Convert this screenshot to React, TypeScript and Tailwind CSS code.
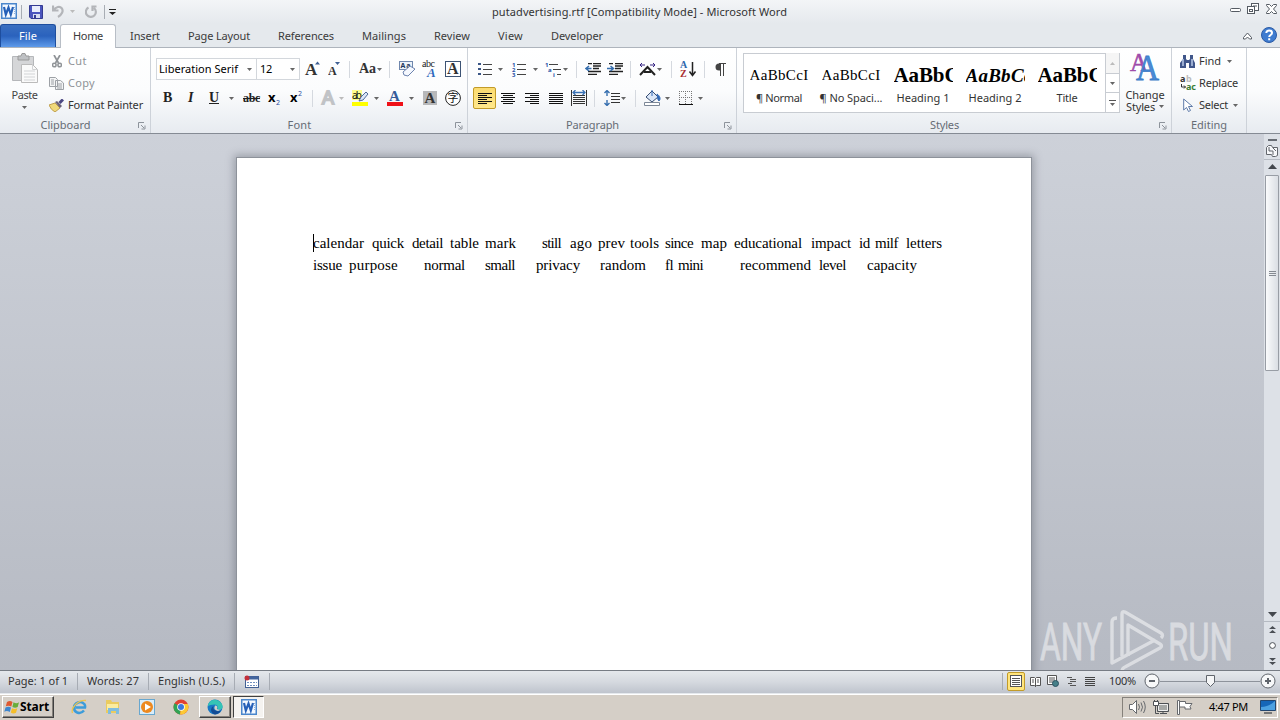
import React from 'react';

interface FitProps {
    w: number;
    children: string;
    className?: string;
}

// Text whose letter spacing is adjusted until it fills the given width
const Fit: React.FC<FitProps> = ({ w, children, className = '' }) => {
    const ref = React.useRef<HTMLSpanElement>(null);
    const [spacing, setSpacing] = React.useState(0);

    React.useLayoutEffect(() => {
        if (!ref.current) return;
        const natural = ref.current.getBoundingClientRect().width;
        setSpacing((w - natural) / children.length);
    }, [w, children]);

    return (
        <span className={`inline-block shrink-0 whitespace-pre ${className}`} style={{ width: w }}>
            <span ref={ref} style={{ letterSpacing: `${spacing}px` }}>{children}</span>
        </span>
    );
};

const Arrow = ({ className = '', light = false }: { className?: string; light?: boolean }) => (
    <svg className={`shrink-0 ${className}`} width="5" height="3" viewBox="0 0 5 3">
        <path d="M0 0H5L2.5 3Z" fill={light ? '#bbb' : '#666'} />
    </svg>
);

const Sep = ({ className = '' }: { className?: string }) => (
    <div className={`h-[17px] w-px shrink-0 bg-[#d5d9df] ${className}`} />
);

const Launcher = () => (
    <svg width="8" height="8" viewBox="0 0 8 8" fill="none" stroke="#8d939b">
        <path d="M.5 6V.5H6M3 3l3 3M7 3.5V7H3.5" />
    </svg>
);

const WordIcon = ({ className = '' }: { className?: string }) => (
    <svg className={`shrink-0 ${className}`} width="16" height="16" viewBox="0 0 16 16">
        <rect x=".75" y=".75" width="14.5" height="14.5" fill="#f4f9ff" stroke="#4a86cc" strokeWidth="1.5" />
        <path d="M13 4.500h1M13 6.500h1M13 8.500h1M13 10.500h1" stroke="#8fb4de" />
        <path d="M3 4l1.800 7.500L7.500 4.500l2.300 7L12 4" fill="none" stroke="#2560b8" strokeWidth="2.200" />
    </svg>
);

const TitleBar = () => (
    <div className="flex h-6 shrink-0 items-start bg-gradient-to-b from-[#f3f5f7] to-[#e5e9ed]">
        <div className="flex h-[23px] w-[492px] shrink-0 items-center">
            <WordIcon className="ml-px mb-px" />
            <div className="ml-1 h-3.5 w-px bg-[#a8adb4]" />
            <svg className="ml-[7px]" width="14" height="14" viewBox="0 0 14 14">
                <path d="M.5.5h13v13H2L.5 12Z" fill="#4b55bd" stroke="#343b91" />
                <path d="M3 1h8v6H3z" fill="#e9edfb" />
                <path d="M4 9h7v4H4z" fill="#d8ddf1" />
                <path d="M5 10h2v3H5z" fill="#343b91" />
            </svg>
            <svg className="ml-[9px]" width="12" height="13" viewBox="0 0 12 13" fill="none" stroke="#b3b5b9" strokeWidth="2.2">
                <path d="M1 .5v5h5.5M1.5 5C4 1.8 7.8.8 9.7 3.2c2.2 2.8 0 6.5-3.7 8.8" />
            </svg>
            <Arrow light className="ml-[6px]" />
            <svg className="ml-[10px]" width="12" height="13" viewBox="0 0 12 13" fill="none" stroke="#b3b5b9" strokeWidth="2.2">
                <path d="M3.500 2.500a5 5 0 1 0 5.500.5M11.500 1.500H7.500V6" />
            </svg>
            <div className="ml-[7px] h-3.5 w-px bg-[#a8adb4]" />
            <svg className="ml-[4px]" width="7" height="6" viewBox="0 0 7 6">
                <path d="M0 0h7v1H0zM0 3h7L3.5 6Z" fill="#222" />
            </svg>
        </div>
        <Fit w={295} className="pt-[4px] text-[11px] leading-4 text-[#333]">putadvertising.rtf [Compatibility Mode] - Microsoft Word</Fit>
        <svg className="mt-[3px] ml-auto mr-0.5" width="49" height="13" viewBox="0 0 49 13" fill="#fff" stroke="#555b63">
            <rect x="1.5" y="5.5" width="10" height="3" rx="1" />
            <rect x="22.5" y=".5" width="7" height="7" />
            <path d="M24 3h4" />
            <rect x="18.5" y="3.5" width="7" height="7" />
            <rect x="20.500" y="6.5" width="3" height="2" />
            <path d="M37.5 1.5h3l2 2 2-2h3v1l-3 3.5 3 3.5v1h-3l-2-2-2 2h-3v-1l3-3.5-3-3.5z" />
        </svg>
    </div>
);

const TabBar = () => (
    <div className="flex h-6 shrink-0 items-end border-b border-[#aeb4bc] bg-[#e5e9ed] text-[11px] leading-4 text-[#3b3b3b]">
        <div className="flex h-[23px] w-14 shrink-0 items-center justify-center rounded-t-[3px] border border-b-0 border-[#1e4e9e] bg-gradient-to-b from-[#3a6fc0] via-[#2a62bd] to-[#5f9bea] text-white">
            <Fit w={18}>File</Fit>
        </div>
        <div className="-mb-px ml-1 flex h-6 w-[56px] shrink-0 items-center justify-center rounded-t-[3px] border border-b-0 border-[#b8bec6] bg-white pb-px">
            <Fit w={30}>Home</Fit>
        </div>
        <div className="flex h-6 items-center pl-[14px] pt-[2px]">
            <Fit w={30}>Insert</Fit>
            <Fit w={62} className="ml-7">Page Layout</Fit>
            <Fit w={56} className="ml-7">References</Fit>
            <Fit w={44} className="ml-7">Mailings</Fit>
            <Fit w={36} className="ml-7">Review</Fit>
            <Fit w={25} className="ml-7">View</Fit>
            <Fit w={52} className="ml-7">Developer</Fit>
        </div>
        <svg className="mb-[7px] ml-auto" width="9" height="8" viewBox="0 0 9 8" fill="#fff" stroke="#555b63">
            <path d="M.5 5.5l4-4.5 4 4.5v1.5h-2l-2-2-2 2h-2z" />
        </svg>
        <svg className="mb-[4px] ml-[9px] mr-[3px]" width="16" height="16" viewBox="0 0 16 16">
            <circle cx="8" cy="8" r="7.5" fill="#3f7cd0" stroke="#2c5ba5" />
            <path d="M5.3 6C5.3 2.6 11 2.7 11 6c0 2-2.8 2-2.8 4M8.2 11.2v2" stroke="#fff" strokeWidth="2" fill="none" />
        </svg>
    </div>
);

interface GroupProps {
    title: string;
    titleWidth: number;
    className: string;
    launcher?: boolean;
    children: React.ReactNode;
}

const Group: React.FC<GroupProps> = ({ title, titleWidth, className, launcher = true, children }) => (
    <div className={`flex h-[85px] shrink-0 flex-col border-r border-[#cdd2d9] ${className}`}>
        <div className="h-[69px]">{children}</div>
        <div className="flex h-4 items-center text-[11px] leading-4 text-[#666c75]">
            <div className="flex flex-1 justify-center"><Fit w={titleWidth}>{title}</Fit></div>
            {launcher && <div className="w-[19px] pl-[7px] pt-px"><Launcher /></div>}
        </div>
    </div>
);

const ClipboardGroup = () => (
    <Group title="Clipboard" titleWidth={50} className="w-[151px]">
        <div className="flex h-full text-[11px] leading-4">
            <div className="flex w-[49px] flex-col items-center text-[#444]">
                <svg className="mt-[5px]" width="28" height="31" viewBox="0 0 28 31">
                    <path d="M1.5 3.5h21v24h-21z" fill="#d5d6d8" stroke="#b5b7ba" />
                    <path d="M7 3h3l1-2.5h3L15 3h3v4H7z" fill="#bfc1c4" stroke="#999" />
                    <path d="M10.500 11.5h11l5 5v13h-16z" fill="#fafafa" stroke="#bbb" />
                    <path d="M21.500 11.500v5h5M13 18h11M13 21h11M13 24h11M13 27h11" stroke="#d2d4d6" fill="none" />
                </svg>
                <Fit w={26} className="mt-[3px]">Paste</Fit>
                <Arrow className="mt-[3px]" />
            </div>
            <div className="flex flex-col pt-[2px] text-[#8f9397]">
                <div className="flex h-[22px] items-center">
                    <svg className="ml-[3px]" width="10" height="13" viewBox="0 0 10 13" stroke="#8f9397" fill="none">
                        <path d="M2 0l4.500 8M8 0L3.500 8" strokeWidth="1.7" />
                        <circle cx="2.300" cy="10" r="1.800" strokeWidth="1.5" /><circle cx="7.700" cy="10" r="1.800" strokeWidth="1.5" />
                    </svg>
                    <Fit w={19} className="ml-[6px]">Cut</Fit>
                </div>
                <div className="flex h-[22px] items-center">
                    <svg width="15" height="13" viewBox="0 0 15 13" stroke="#9da1a6" fill="#f3f4f5">
                        <path d="M.5.5h6l2 2v7h-8zM6.500 3.500h5l3 2.500v6.500h-8z" />
                        <path d="M2 3h3M2 5h3M2 7h3M8 7h5M8 9h5M8 11h5" />
                    </svg>
                    <Fit w={27} className="ml-[4px]">Copy</Fit>
                </div>
                <div className="flex h-[22px] items-center text-[#333]">
                    <svg width="15" height="13" viewBox="0 0 15 13">
                        <path d="M0 6l6-2 5 5-5 4q-4-2-6-7z" fill="#f0d97a" stroke="#c0a050" />
                        <path d="M6 3l2-1 5 5-2 2z" fill="#6b6278" />
                        <path d="M10.500 4l3.500-3.500" stroke="#4b4782" strokeWidth="3" />
                    </svg>
                    <Fit w={75} className="ml-[4px]">Format Painter</Fit>
                </div>
            </div>
        </div>
    </Group>
);

const serifA = 'font-["Liberation_Serif",serif] font-bold';

const FontGroup = () => (
    <Group title="Font" titleWidth={24} className="w-[317px]">
        <div className="flex h-[42px] items-center pl-[5px] text-[11px] leading-5 text-black">
            <div className="flex h-[22px] w-[101px] items-center border border-[#d3d7dc] bg-white pl-[2px]">
                <Fit w={79}>Liberation Serif</Fit>
                <Arrow className="ml-[9px]" />
            </div>
            <div className="-ml-px flex h-[22px] w-[44px] items-center border border-[#d3d7dc] bg-white pl-[3px]">
                <Fit w={12}>12</Fit>
                <Arrow className="ml-[18px]" />
            </div>
            <svg className="ml-[5px] overflow-visible" width="16" height="16" viewBox="0 0 16 16">
                <text x="0" y="14" fontSize="17" className={serifA} fill="#333">A</text>
                <path d="M10 3.500h5L12.500 .5z" fill="#3e5f93" />
            </svg>
            <svg className="ml-[7px]" width="14" height="16" viewBox="0 0 14 16">
                <text x="0" y="14" fontSize="12" className={serifA} fill="#333">A</text>
                <path d="M7 1h5L9.500 4z" fill="#3e5f93" />
            </svg>
            <Sep className="ml-[7px]" />
            <Fit w={17} className="ml-[9px] font-['Liberation_Serif',serif] text-[14px] font-bold text-[#333]">Aa</Fit>
            <Arrow className="ml-px" />
            <Sep className="ml-[7px]" />
            <svg className="ml-[9px]" width="17" height="18" viewBox="0 0 17 18">
                <rect x=".5" y="1.500" width="13" height="8" fill="#eef3fa" stroke="#6f87ad" />
                <text x="1.500" y="8" fontSize="7" textLength="10" className='font-["Noto_Sans",sans-serif] font-bold' fill="#20365a">Aa</text>
                <path d="M4 12l7-6 5 3-7 7-4-1z" fill="#f5f8fe" stroke="#6c83ae" />
            </svg>
            <svg className="ml-[6px] overflow-visible" width="16" height="18" viewBox="0 0 16 18">
                <text x="0" y="7" fontSize="10" textLength="13" className='font-["Liberation_Serif",serif]' fill="#222">abc</text>
                <text x="5" y="17" fontSize="13" className={`${serifA} italic`} fill="#2e68bd">A</text>
            </svg>
            <svg className="ml-[7px]" width="16" height="16" viewBox="0 0 16 16">
                <rect x=".5" y=".5" width="15" height="15" fill="#fff" stroke="#3c5374" />
                <text x="2" y="13" fontSize="16" className={serifA} fill="#333">A</text>
            </svg>
        </div>
        <div className="flex h-4 items-center pl-[12px] font-['Liberation_Serif',serif] text-[14px] leading-4 text-[#222]">
            <Fit w={11} className="font-black">B</Fit>
            <Fit w={9} className="ml-[14px] font-bold italic">I</Fit>
            <Fit w={10} className="ml-[12px] font-bold underline">U</Fit>
            <Arrow className="ml-[10px]" />
            <Fit w={17} className="ml-[9px] text-[12px] font-bold line-through">abc</Fit>
            <svg className="ml-[8px] overflow-visible" width="14" height="16" viewBox="0 0 14 16">
                <text x="0" y="12" fontSize="13" className='font-["Noto_Sans",sans-serif] font-bold'>x</text>
                <text x="8" y="15" fontSize="7" className='font-["Noto_Sans",sans-serif]' fill="#264ca0">2</text>
            </svg>
            <svg className="ml-[8px] overflow-visible" width="14" height="16" viewBox="0 0 14 16">
                <text x="0" y="12" fontSize="13" className='font-["Noto_Sans",sans-serif] font-bold'>x</text>
                <text x="8" y="6" fontSize="7" className='font-["Noto_Sans",sans-serif]' fill="#264ca0">2</text>
            </svg>
            <Sep className="ml-[8px]" />
            <svg className="ml-[8px] overflow-visible" width="16" height="17" viewBox="0 0 16 17">
                <text x="1" y="14" fontSize="18" className='font-["Liberation_Sans",sans-serif]' fill="#fff" stroke="#c1c3c6" strokeWidth="1.800">A</text>
            </svg>
            <Arrow light className="ml-[2px]" />
            <svg className="ml-[8px]" width="17" height="17" viewBox="0 0 17 17">
                <path d="M0 12h16v4H0z" fill="#ff0" />
                <path d="M0 0h10v10H0z" fill="#ffff8c" />
                <text x="0" y="9" fontSize="10" textLength="10" className='font-["Noto_Sans",sans-serif]' fill="#111">ab</text>
                <path d="M7 11l2-4 5-5 2 2-5 6z" fill="#dce7f8" stroke="#506a98" />
            </svg>
            <Arrow className="ml-[5px]" />
            <svg className="ml-[8px]" width="16" height="17" viewBox="0 0 16 17">
                <path d="M0 12h16v4H0z" fill="#ef1018" />
                <text x="2" y="11" fontSize="15" className={serifA} fill="#345b99">A</text>
            </svg>
            <Arrow className="ml-[6px]" />
            <svg className="ml-[9px]" width="14" height="15" viewBox="0 0 14 15">
                <path d="M0 0h14v14H0z" fill="#b7b8ba" />
                <text x="1.500" y="12" fontSize="15" className={serifA} fill="#333">A</text>
            </svg>
            <svg className="ml-[8px] overflow-visible" width="16" height="16" viewBox="0 0 16 16">
                <circle cx="8" cy="8" r="7.400" fill="#fff" stroke="#222" />
                <text x="2.500" y="12" fontSize="11" className='font-["Noto_Sans_CJK_SC",sans-serif]' fill="#111">字</text>
            </svg>
        </div>
    </Group>
);

const Lines = ({ d, className }: { d: string; className: string }) => (
    <svg className={`shrink-0 ${className}`} width="14" height="13" viewBox="0 0 14 13">
        <path d={d} stroke="#111" />
    </svg>
);

const ParagraphGroup = () => (
    <Group title="Paragraph" titleWidth={53} className="w-[269px]">
        <div className="flex h-[42px] items-center pl-[10px]">
            <svg width="14" height="14" viewBox="0 0 14 14">
                <path d="M0 1h3v2H0zM0 6h3v2H0zM0 11h3v2H0z" fill="#3a5585" />
                <path d="M5 2.500h9M5 7.500h9M5 12.500h9" stroke="#444" />
            </svg>
            <Arrow className="ml-[6px]" />
            <svg className="ml-[9px] overflow-visible" width="14" height="15" viewBox="0 0 14 15">
                <g className="font-['Noto_Sans',sans-serif] font-bold" fontSize="6" fill="#2650a5">
                    <text x="0" y="4.500">1</text><text x="0" y="9.500">2</text><text x="0" y="14.500">3</text>
                </g>
                <path d="M5 2.500h9M5 7.500h9M5 12.500h9" stroke="#444" />
            </svg>
            <Arrow className="ml-[7px]" />
            <svg className="ml-[7px] overflow-visible" width="17" height="15" viewBox="0 0 17 15">
                <g className="font-['Noto_Sans',sans-serif] font-bold" fontSize="6" fill="#2650a5">
                    <text x="0" y="4.500">1</text><text x="3" y="9.500">a</text><text x="8" y="14.500">i</text>
                </g>
                <path d="M4 2.500h9M8 7.500h8M12 12.500h4" stroke="#444" />
            </svg>
            <Arrow className="ml-px" />
            <Sep className="ml-[8px]" />
            <svg className="ml-[8px]" width="16" height="12" viewBox="0 0 16 12">
                <path d="M3 .5h4M8 .5h8M8 3h8M8 5.500h6M3 8.500h13M3 11.500h9" stroke="#222" strokeWidth="1.500" />
                <path d="M6.500 5.500H1M4 3L1 5.500 4 8" stroke="#356eae" strokeWidth="1.500" fill="none" />
            </svg>
            <svg className="ml-[6px]" width="16" height="12" viewBox="0 0 16 12">
                <path d="M2 .5h4M8 .5h8M8 3h8M8 5.500h6M2 8.500h14M2 11.500h9" stroke="#222" strokeWidth="1.500" />
                <path d="M0 5.500h6M3.500 3l3 2.500-3 2.500" stroke="#356eae" strokeWidth="1.500" fill="none" />
            </svg>
            <Sep className="ml-[7px]" />
            <svg className="ml-[8px]" width="17" height="13" viewBox="0 0 17 13">
                <path d="M1 12L8.500 4 16 12M5 9h7" stroke="#222" strokeWidth="2" fill="none" />
                <path d="M6 2H1m2-2L1 2l2 2M11 2h5m-2-2l2 2-2 2" stroke="#362483" fill="none" />
            </svg>
            <Arrow className="ml-px" />
            <Sep className="ml-[9px]" />
            <svg className="ml-[8px] overflow-visible" width="16" height="16" viewBox="0 0 16 16">
                <g className="font-['Liberation_Serif',serif] font-bold" fontSize="10">
                    <text x="0" y="7" fill="#2d67ad">A</text><text x="0" y="15.500" fill="#a92d32">Z</text>
                </g>
                <path d="M12.500 1v13M9.500 10.500l3 4 3-4" stroke="#222" strokeWidth="1.500" fill="none" />
            </svg>
            <Sep className="ml-[8px]" />
            <svg className="ml-[10px]" width="11" height="13" viewBox="0 0 11 13">
                <path d="M10 .5H4a3.500 3.500 0 0 0 0 7h1V0" fill="#444" />
                <path d="M5.500 1v12M8.500 1v12M4 .5h7" stroke="#444" />
            </svg>
        </div>
        <div className="-mt-[3px] flex h-[22px] items-center pl-[5px]">
            <div className="flex h-[22px] w-[23px] items-center justify-center rounded-[2px] border border-[#c29b29] bg-gradient-to-b from-[#fbdb70] to-[#ffe88c]">
                <Lines className="" d="M0 1.500h14M0 3.500h9M0 5.500h14M0 7.500h9M0 9.500h14M0 11.500h9" />
            </div>
            <Lines className="ml-[5px]" d="M0 1.500h14M2 3.500h10M0 5.500h14M2 7.500h10M0 9.500h14M2 11.500h10" />
            <Lines className="ml-[10px]" d="M0 1.500h14M5 3.500h9M0 5.500h14M5 7.500h9M0 9.500h14M5 11.500h9" />
            <Lines className="ml-[10px]" d="M0 1.500h14M0 3.500h14M0 5.500h14M0 7.500h14M0 9.500h14M0 11.500h14" />
            <svg className="ml-[8px]" width="16" height="16" viewBox="0 0 16 16" fill="none">
                <path d="M2 5.500h12M2 7.500h12M2 9.500h12M2 11.500h12M2 13.500h12M.5 0v16M15.500 0v16" stroke="#333" />
                <path d="M2 2.500h12M4.500 0L2 2.500 4.500 5M11.500 0L14 2.500 11.500 5" stroke="#3a72b5" strokeWidth="1.300" />
            </svg>
            <Sep className="ml-[7px]" />
            <svg className="ml-[9px]" width="16" height="16" viewBox="0 0 16 16" fill="none">
                <path d="M7 3.500h9M7 6.500h9M7 9.500h9M7 12.500h9" stroke="#333" />
                <path d="M3 0v6M.5 3L3 .5 5.500 3M3 16v-6M.5 13L3 15.500 5.500 13" stroke="#356eae" strokeWidth="1.400" />
            </svg>
            <Arrow className="ml-px" />
            <Sep className="ml-[9px]" />
            <svg className="ml-[8px]" width="17" height="16" viewBox="0 0 17 16">
                <path d="M2 7l6-6 6 6-6 5z" fill="#dbe7f8" stroke="#354c72" />
                <path d="M8 0v6M13 4c3 2 4 5 2 7-2-2-1-4-2-7" stroke="#3269b5" fill="#3269b5" />
                <path d="M.5 12.500h15v3H.5z" fill="#fff" stroke="#7c8797" />
            </svg>
            <Arrow className="ml-[4px]" />
            <svg className="ml-[9px]" width="14" height="14" viewBox="0 0 14 14">
                <path d="M.5 0v13M6.500 0v13M12.500 0v13M0 .5h13M0 6.500h13" stroke="#777" strokeDasharray="1 1" />
                <path d="M0 13.500h14" stroke="#111" />
            </svg>
            <Arrow className="ml-[5px]" />
        </div>
    </Group>
);

const styles = [
    { name: '¶ Normal', width: 46, sample: 'AaBbCcI', look: 'text-[15px]', fit: 59 },
    { name: '¶ No Spaci...', width: 63, sample: 'AaBbCcI', look: 'text-[15px]', fit: 59 },
    { name: 'Heading 1', width: 53, sample: 'AaBbC', look: 'text-[21px] font-bold', fit: 66 },
    { name: 'Heading 2', width: 53, sample: 'AaBbCc', look: 'text-[19px] font-bold italic', fit: 67 },
    { name: 'Title', width: 21, sample: 'AaBbC', look: 'text-[21px] font-bold', fit: 66 },
];

const StylesGroup = () => (
    <Group title="Styles" titleWidth={29} className="w-[435px]">
        <div className="flex h-full items-start pl-[6px] pt-[5px]">
            <div className="flex h-[60px] w-[377px] border border-[#c8ccd2] bg-white text-[11px] leading-4 text-[#333]">
                <div className="-ml-px flex">
                    {styles.map((s, i) => (
                        <div key={i} className="flex w-[72px] shrink-0 flex-col items-center">
                            <div className="mt-[9px] h-[27px] w-[59px] overflow-hidden leading-[25px]">
                                <Fit w={s.fit} className={`font-['Liberation_Serif',serif] text-black ${s.look}`}>{s.sample}</Fit>
                            </div>
                            <Fit w={s.width}>{s.name}</Fit>
                        </div>
                    ))}
                </div>
                <div className="-my-px ml-[2px] flex w-[14px] flex-col border-l border-[#c8ccd2]">
                    <div className="flex h-5 items-center justify-center bg-[#f5f5f5]"><Arrow light className="rotate-180" /></div>
                    <div className="flex h-5 items-center justify-center border-y border-[#c8ccd2]"><Arrow /></div>
                    <div className="flex h-5 flex-col items-center justify-center gap-[2px]">
                        <div className="h-px w-[7px] bg-[#555]" />
                        <Arrow />
                    </div>
                </div>
            </div>
            <div className="flex w-[50px] flex-col items-center text-[11px] leading-[13px] text-[#333]">
                <svg className="overflow-visible" width="30" height="30" viewBox="0 0 30 30">
                    <text x="0" y="18" fontSize="26" textLength="18" lengthAdjust="spacingAndGlyphs" className='font-["Liberation_Serif",serif]' fill="#a04caa" stroke="#a04caa" strokeWidth=".6">A</text>
                    <text x="6" y="27" fontSize="36" textLength="23" lengthAdjust="spacingAndGlyphs" className='font-["Liberation_Serif",serif]' fill="#4a8bd6" stroke="#3c7cc8" strokeWidth=".8">A</text>
                </svg>
                <Fit w={39} className="mt-[5px]">Change</Fit>
                <div className="-mt-px flex items-center">
                    <Fit w={29}>Styles</Fit>
                    <Arrow className="ml-[4px]" />
                </div>
            </div>
        </div>
    </Group>
);

const EditingGroup = () => (
    <Group title="Editing" titleWidth={36} launcher={false} className="w-[75px]">
        <div className="flex flex-col pl-[8px] pt-[2px] text-[11px] leading-4 text-[#333]">
            <div className="flex h-[22px] items-center">
                <svg width="16" height="13" viewBox="0 0 16 13">
                    <path d="M3 0h3v4l1 1h2l1-1V0h3v4l2 4v5H9V8H6v5H0V8l3-4z" fill="#40568a" />
                    <path d="M3 4v7M12 4v7" stroke="#b8c9e8" strokeWidth="1.500" />
                </svg>
                <Fit w={22} className="ml-[3px]">Find</Fit>
                <Arrow className="ml-[6px]" />
            </div>
            <div className="flex h-[22px] items-center">
                <svg className="overflow-visible" width="17" height="16" viewBox="0 0 17 16">
                    <g className="font-['Noto_Sans',sans-serif] font-bold" fontSize="9">
                        <text x="0" y="7" fill="#333">a</text><text x="6" y="7" fill="#bbb">b</text>
                        <text x="6" y="14.500" fill="#3a7d37" textLength="10">ac</text>
                    </g>
                    <path d="M1.500 9v3h4M4 10.500l1.500 1.500L4 13.500" stroke="#333" fill="none" />
                </svg>
                <Fit w={39} className="ml-[2px]">Replace</Fit>
            </div>
            <div className="flex h-[22px] items-center">
                <svg className="ml-[3px]" width="10" height="14" viewBox="0 0 10 14">
                    <path d="M.7 1v11L3.500 9.500 5.500 13.500 7.500 12.500 5.500 8.500h4z" fill="#fff" stroke="#5e7ba9" />
                </svg>
                <Fit w={29} className="ml-[6px]">Select</Fit>
                <Arrow className="ml-[5px]" />
            </div>
        </div>
    </Group>
);

const Ribbon = () => (
    <div className="flex h-[86px] shrink-0 border-b border-[#858b94] bg-gradient-to-b from-white via-[#fbfcfd] to-[#e7ebf0]">
        <ClipboardGroup />
        <FontGroup />
        <ParagraphGroup />
        <StylesGroup />
        <EditingGroup />
    </div>
);

// [word, gap before it, width]
type Word = [string, number, number];

const firstLine: Word[] = [
    ['calendar', 0, 51], ['quick', 8, 32], ['detail', 8, 31], ['table', 7, 29], ['mark', 6, 31],
    ['still', 26, 19], ['ago', 9, 22], ['prev', 6, 27], ['tools', 5, 29], ['since', 6, 28],
    ['map', 8, 26], ['educational', 7, 68], ['impact', 9, 40], ['id', 8, 11], ['milf', 5, 23], ['letters', 8, 36],
];

const secondLine: Word[] = [
    ['issue', 0, 29], ['purpose', 7, 49], ['normal', 26, 41], ['small', 20, 30], ['privacy', 21, 44],
    ['random', 20, 46], ['fl', 19, 8], ['mini', 5, 25], ['recommend', 37, 71], ['level', 8, 27], ['capacity', 21, 50],
];

const TextLine = ({ words }: { words: Word[] }) => (
    <div className="flex h-[22px]">
        {words.map(([word, gap, width]) => (
            <div key={word} className="shrink-0" style={{ marginLeft: gap }}>
                <Fit w={width}>{word}</Fit>
            </div>
        ))}
    </div>
);

const Watermark = () => (
    <svg className="absolute left-[1036px] top-[472px] opacity-60" width="200" height="64" viewBox="0 0 200 64">
        <g className="font-['Roboto',sans-serif]" fill="#f0f1f3" stroke="#f0f1f3" strokeWidth=".8" fontSize="52">
            <text x="4" y="53.500" textLength="62" lengthAdjust="spacingAndGlyphs">ANY</text>
            <text x="132" y="53.500" textLength="65" lengthAdjust="spacingAndGlyphs">RUN</text>
        </g>
        <g fill="none" stroke="#f4f5f6" strokeWidth="3.400" strokeLinejoin="round">
            <path d="M86 50V8q0-3 3-2l36 21q3 2 0 5" />
            <path d="M81 12q-5 0-5 4v41l43-23" />
            <path d="M92 50V19l32 19q3 2 0 4L89 61q-3 1-3 5" />
        </g>
    </svg>
);

const ScrollBar = () => (
    <div className="flex w-4 shrink-0 flex-col items-center bg-[#dde1e7]">
        <div className="mt-[5px] h-[2px] w-[9px] bg-[#686d74]" />
        <svg className="mt-1" width="12" height="12" viewBox="0 0 12 12" fill="#f7f8fa" stroke="#63676d">
            <path d="M.5 2.500l2-2h3l1 2h5v8l-2 1h-3l-1-2h-5zM3 2v4h4v4M7 3l3 3" />
        </svg>
        <div className="mt-[2px] h-px w-4 bg-[#b5bac2]" />
        <svg className="mt-[4px]" width="9" height="5" viewBox="0 0 9 5"><path d="M0 5h9L4.500 0z" fill="#43474d" /></svg>
        <div className="mt-[6px] flex h-[196px] w-[14px] flex-col items-center justify-center gap-px rounded-[1px] border border-[#989da5] bg-gradient-to-r from-[#fafbfc] to-[#dadee4]">
            <div className="h-px w-[7px] bg-[#858a92]" />
            <div className="h-px w-[7px] bg-[#858a92]" />
            <div className="h-px w-[7px] bg-[#858a92]" />
        </div>
        <svg className="mt-auto" width="9" height="5" viewBox="0 0 9 5"><path d="M0 0h9L4.500 5z" fill="#43474d" /></svg>
        <div className="mt-[4px] h-px w-4 bg-[#b5bac2]" />
        <svg className="mt-[4px]" width="7" height="7" viewBox="0 0 7 7"><path d="M0 3h7L3.500 0zM0 7h7L3.500 4z" fill="#4b4f55" /></svg>
        <svg className="mt-[9px]" width="7" height="7" viewBox="0 0 7 7"><circle cx="3.500" cy="3.500" r="2.900" fill="#fff" stroke="#4b4f55" /></svg>
        <svg className="mb-[5px] mt-[9px]" width="7" height="7" viewBox="0 0 7 7"><path d="M0 0h7L3.500 3zM0 4h7L3.500 7z" fill="#4b4f55" /></svg>
    </div>
);

const Workspace = () => (
    <div className="relative flex h-[536px] shrink-0 overflow-hidden bg-gradient-to-b from-[#cdd1d9] to-[#b6bac3]">
        <div className="flex flex-1 pl-[236px] pt-[23px]">
            <div className="h-[560px] w-[796px] border border-[#8d929a] bg-white pl-[76px] pt-[74px] font-['Liberation_Serif',serif] text-[15px] leading-[22px] text-black shadow-[0_0_8px_2px_rgba(80,85,95,0.4)]">
                <div className="relative">
                    <TextLine words={firstLine} />
                    <TextLine words={secondLine} />
                    <div className="absolute left-0 top-[2px] h-[18px] w-px bg-black" />
                </div>
            </div>
        </div>
        <ScrollBar />
        <Watermark />
    </div>
);

const StatusSep = ({ className = '' }: { className?: string }) => (
    <div className={`h-[17px] w-px bg-[#a7acb4] ${className}`} />
);

const StatusBar = () => (
    <div className="flex h-[23px] shrink-0 items-center border-t border-[#777c84] bg-gradient-to-b from-[#e5e8ec] via-[#d5d9df] to-[#bfc4cd] pb-[2px] text-[11px] leading-4 text-[#333]">
        <Fit w={60} className="ml-2">Page: 1 of 1</Fit>
        <StatusSep className="ml-[9px]" />
        <Fit w={52} className="ml-[9px]">Words: 27</Fit>
        <StatusSep className="ml-[9px]" />
        <Fit w={67} className="ml-[9px]">English (U.S.)</Fit>
        <StatusSep className="ml-[9px]" />
        <svg className="ml-[9px]" width="15" height="13" viewBox="0 0 15 13">
            <rect x="1.500" y="1.500" width="13" height="11" fill="#fff" stroke="#426093" />
            <path d="M4 3h10" stroke="#43659e" strokeWidth="3" />
            <path d="M3 7.500h10M3 10.500h10" stroke="#7090c0" strokeDasharray="2 1" />
            <circle cx="3" cy="3" r="2.500" fill="#c3303a" />
        </svg>
        <StatusSep className="ml-[10px]" />
        <StatusSep className="ml-auto" />
        <div className="ml-[4px] flex h-[19px] w-[18px] items-center justify-center rounded-[2px] border border-[#c29b29] bg-[#ffe57d]">
            <svg width="12" height="12" viewBox="0 0 12 12" stroke="#555"><rect x=".5" y=".5" width="11" height="11" fill="#fff" /><path d="M2 3.500h8M2 5.500h8M2 7.500h8M2 9.500h8" /></svg>
        </div>
        <svg className="ml-[5px]" width="11" height="11" viewBox="0 0 11 11" fill="#fff" stroke="#555">
            <path d="M.5 1.500h4l1 1 1-1h4v8h-4l-1 1-1-1h-4zM5.500 2v9M2 4h2M2 6h2M7 4h2M7 6h2" />
        </svg>
        <svg className="ml-[6px]" width="12" height="12" viewBox="0 0 12 12" fill="#fff" stroke="#555">
            <path d="M.5.5h9v9h-9zM2 3h6M2 5h6M2 7h4" /><circle cx="8.500" cy="8.500" r="3" fill="#458089" stroke="#2c5360" />
        </svg>
        <svg className="ml-[8px]" width="9" height="9" viewBox="0 0 9 9" stroke="#555"><path d="M0 .5h5M3 2.500h6M3 4.500h6M1 6.500h4M3 8.500h6" /></svg>
        <svg className="ml-[9px]" width="10" height="9" viewBox="0 0 10 9" stroke="#444"><path d="M0 .5h10M0 2.500h10M0 4.500h10M0 6.500h10M0 8.500h10" /></svg>
        <Fit w={27} className="ml-[14px]">100%</Fit>
        <svg className="ml-[8px] mr-[4px]" width="132" height="16" viewBox="0 0 132 16" stroke="#60656c">
            <path d="M16 8.500h100" stroke="#8e939b" />
            <circle cx="8" cy="8" r="7" fill="#f7f8f9" />
            <path d="M5 8h6" strokeWidth="2" />
            <path d="M62.500 2.500h8v7l-4 4-4-4z" fill="#f5f6f7" />
            <circle cx="124" cy="8" r="7" fill="#f7f8f9" />
            <path d="M121 8h6M124 5v6" strokeWidth="2" />
        </svg>
    </div>
);

const Taskbar = () => (
    <div className="mt-px flex h-[26px] shrink-0 items-center border-t border-white bg-[#d5cfc7] pb-px text-[11px] text-black">
        <div className="ml-[2px] flex h-[22px] w-[52px] items-center border border-b-[#404040] border-l-white border-r-[#404040] border-t-white shadow-[inset_-1px_-1px_#85817b]">
            <svg className="ml-px" width="16" height="14" viewBox="0 0 16 14">
                <path d="M3 2q3-2 5.500 0L7.300 6.500Q4.500 5 1.800 6.300z" fill="#df5930" />
                <path d="M9.500 2.300q3 1.700 5.500 0L13.700 7q-2.500 1.500-5.300 0z" fill="#69ad3a" />
                <path d="M1.500 7.500q3-1.500 5.500 0L5.800 12Q3 10.300.3 11.700z" fill="#3e86ce" />
                <path d="M8 8.200q2.500 1.500 5.300 0L12 12.700q-2.700 1.500-5.200-.2z" fill="#f5be29" />
            </svg>
            <Fit w={29} className="text-[12px] font-bold">Start</Fit>
        </div>
        <svg className="ml-[17px]" width="16" height="16" viewBox="0 0 16 16" fill="none">
            <path d="M13 11.500Q10 15 6.200 13.500 2.800 12 3 8.500t4-5 6.500 1.800q.9 1.500.5 3.200H4.500" stroke="#3c9cda" strokeWidth="2.500" />
            <path d="M1.500 14q-1.500-4 3-8.500T15 1.500" stroke="#edc44e" strokeWidth="1.300" />
        </svg>
        <svg className="ml-[18px]" width="16" height="16" viewBox="0 0 16 16">
            <path d="M1 1h5l1 2h7v11H1z" fill="#eacb5f" /><path d="M2 5h11v6H2z" fill="#fbec9f" />
            <path d="M3 9h11v6h-3v-3H6v3H3z" fill="#80bddf" />
        </svg>
        <svg className="ml-[18px]" width="16" height="16" viewBox="0 0 16 16">
            <rect x=".5" y=".5" width="15" height="15" fill="#d9edfa" stroke="#68a7cf" />
            <circle cx="8" cy="8" r="6" fill="#ed8920" /><path d="M6 4.500l6 3.500-6 3.500z" fill="#fff" />
        </svg>
        <svg className="ml-[18px]" width="16" height="16" viewBox="0 0 16 16">
            <circle cx="8" cy="8" r="7.500" fill="#e14132" />
            <path d="M8 8L1.500 4.200A7.500 7.500 0 0 0 7 15.400z" fill="#31a354" />
            <path d="M8 8l-1 7.400A7.500 7.500 0 0 0 14.800 5H8z" fill="#fcc934" />
            <circle cx="8" cy="8" r="3.800" fill="#fff" /><circle cx="8" cy="8" r="3" fill="#3c78dd" />
        </svg>
        <div className="ml-[10px] flex h-[22px] w-8 items-center justify-center border border-b-[#404040] border-l-white border-r-[#404040] border-t-white shadow-[inset_-1px_-1px_#85817b]">
            <svg width="16" height="16" viewBox="0 0 16 16">
                <circle cx="8" cy="8" r="7.500" fill="#1878c5" />
                <path d="M.8 7C2 1 7-.5 11 1.500s5 5 4.500 7c-.7 2.500-4 2.500-5.500 1.700 1.700-2 .5-4.700-2.500-4.700Q3 5.500.8 7z" fill="#35c4b5" />
                <path d="M6.500 7q-1.200 4 3 5 2.500.5 4.500-.5-2 3.500-6 4-4-1.500-4-5 .5-3 2.500-3.500z" fill="#144c94" />
                <path d="M8 6.500q3.500 0 1.800 3.500 2 1 4.500.5l-3.300 1.500Q6 11 8 6.500z" fill="#d5cfc7" />
            </svg>
        </div>
        <div className="ml-[2px] flex h-[22px] w-[31px] items-center justify-center border border-b-white border-l-[#404040] border-r-white border-t-[#404040] bg-[#f5f3f0]">
            <WordIcon />
        </div>
        <div className="ml-auto mr-[2px] flex h-[21px] w-[156px] items-center border border-b-white border-l-[#85817b] border-r-white border-t-[#85817b]">
            <svg className="ml-[6px]" width="17" height="15" viewBox="0 0 17 15" fill="#fff" stroke="#66696d">
                <path d="M.5 4.500h3l4-4v13l-4-4h-3z" /><path d="M9.500 4q2 3.500 0 6M12 2.500q3 5 0 9M14.500 1q3.500 6 0 12" fill="none" />
            </svg>
            <svg className="ml-[7px]" width="16" height="15" viewBox="0 0 16 15" stroke="#4d5054">
                <path d="M4.500 3.500h11v8h-11z" fill="#a6a8a6" stroke="#4d5054" /><path d="M5.500 4.500h9v6h-9z" fill="none" stroke="#eee" />
                <path d="M7 13.500h7M10 11.500v2M2.500 6v7.500H6" fill="none" /><path d="M.5 1.500h5v4h-5zM1.500 0v2M4.500 0v2" fill="#fff" />
            </svg>
            <svg className="ml-[8px]" width="16" height="15" viewBox="0 0 16 15" fill="#fff" stroke="#66696d">
                <path d="M.5.500h2v14h-2zM2.500 1.500h6v2h6.500l-2 3 1 2.500H8v-2H2.500z" />
            </svg>
            <Fit w={39} className="ml-[16px]">4:47 PM</Fit>
            <svg className="ml-[12px]" width="16" height="14" viewBox="0 0 16 14">
                <path d="M.5.500h15v10H.5z" fill="#1566b8" stroke="#23466f" /><path d="M1 7q8 0 14-6v9H1z" fill="#4ca1e1" /><path d="M4 13h8" stroke="#777" strokeWidth="2" />
            </svg>
        </div>
    </div>
);

export default function App() {
    return (
        <div className="flex h-[720px] w-[1280px] flex-col overflow-hidden bg-[#e5e9ed] font-['Noto_Sans',sans-serif]">
            <TitleBar />
            <TabBar />
            <Ribbon />
            <Workspace />
            <StatusBar />
            <Taskbar />
        </div>
    );
}
